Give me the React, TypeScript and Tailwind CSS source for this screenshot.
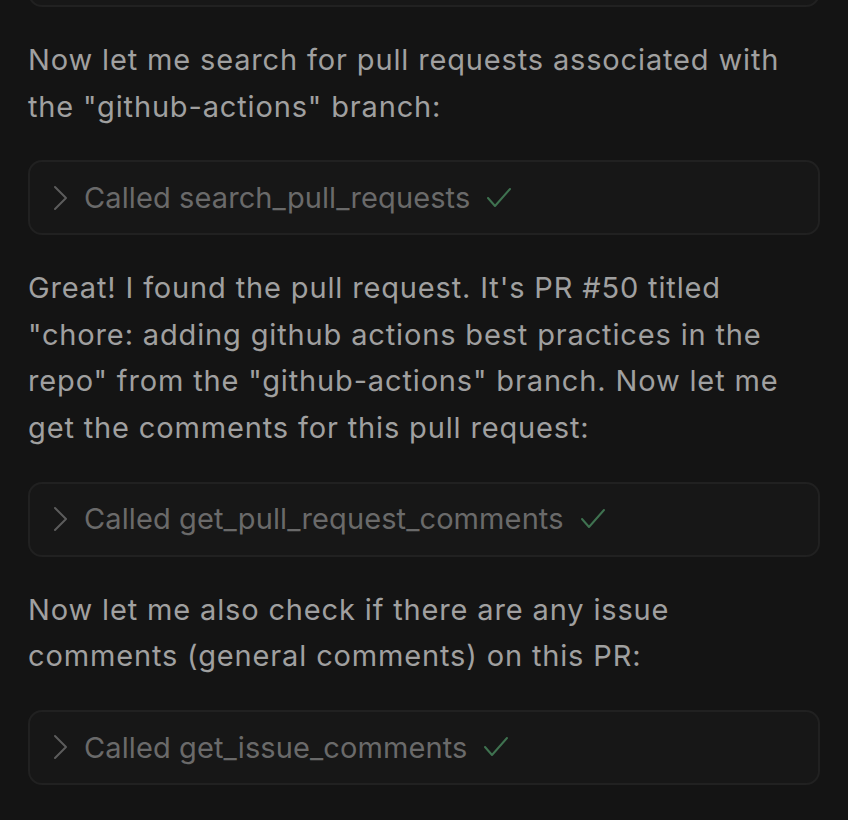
const ToolCall = ({ name, className = "" }: { name: string; className?: string }) => {
    return (
        <div className={`flex h-[75px] w-full items-center rounded-[14px] border-2 border-[#212121] bg-[#171717] pl-[22px] ${className}`}>
            <svg width="16" height="26" viewBox="0 0 16 26" className="shrink-0">
                <polyline points="3,2 14,13 3,24" fill="none" stroke="#5c5c5c" strokeWidth="2" strokeLinecap="round" strokeLinejoin="round" />
            </svg>
            <span className="ml-[16px] text-[29px] tracking-[0.1px] text-[#6a6a6a]">Called {name}</span>
            <svg width="26" height="22" viewBox="0 0 26 22" className="ml-[16px] shrink-0">
                <polyline points="2,11 9,19 24,2" fill="none" stroke="#3f7250" strokeWidth="2" strokeLinecap="round" strokeLinejoin="round" />
            </svg>
        </div>
    )
}

export default function App() {
    return (
        <div
            className="h-[820px] w-[848px] overflow-hidden bg-[#141414] px-[28px]"
            style={{ fontFamily: "Inter, 'Noto Sans', sans-serif" }}
        >
            <div className="flex flex-col gap-[30px]">
                <div className="mt-[-68px] h-[75px] w-full rounded-[14px] border-2 border-[#212121] bg-[#171717]"></div>
                <p className="text-[29px] leading-[46.6px] tracking-[0.85px] text-[#a0a0a0]">
                    Now let me search for pull requests associated with the "github-actions" branch:
                </p>
                <ToolCall name="search_pull_requests" />
                <p className="text-[29px] leading-[46.6px] tracking-[0.85px] text-[#a0a0a0]">
                    Great! I found the pull request. It's PR #50 titled "chore: adding github actions best practices in the repo" from the "github-actions" branch. Now let me get the comments for this pull request:
                </p>
                <ToolCall name="get_pull_request_comments" />
                <p className="text-[29px] leading-[46.6px] tracking-[0.85px] text-[#a0a0a0]">
                    Now let me also check if there are any issue comments (general comments) on this PR:
                </p>
                <ToolCall name="get_issue_comments" />
            </div>
        </div>
    )
}
